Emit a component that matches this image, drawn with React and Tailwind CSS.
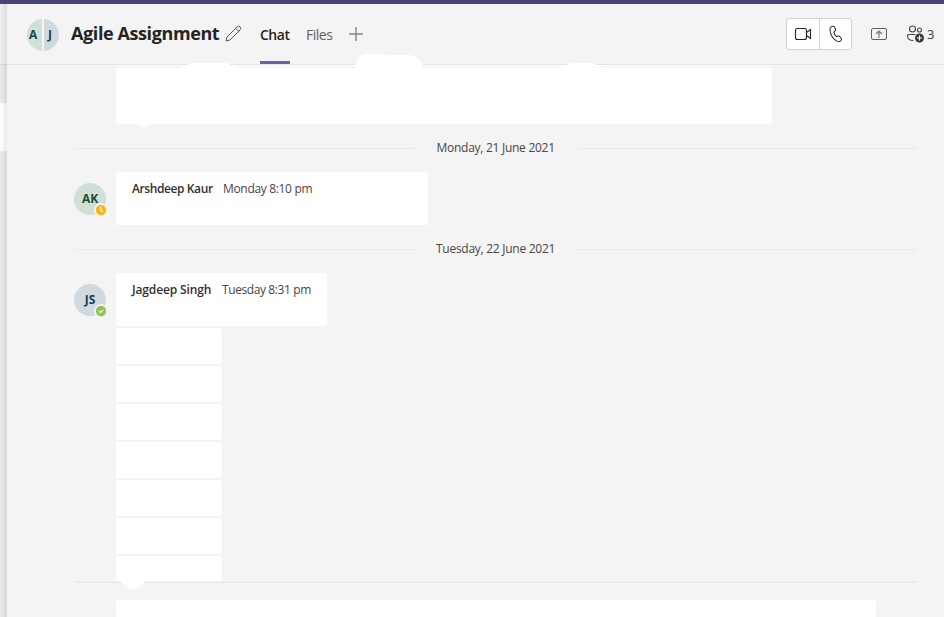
import React from "react";

const line = "h-px bg-[#e8e8e8]";

function DateDivider({ label, left, right }) {
  return (
    <div className="mt-4 flex h-4 w-[843px] items-center justify-between">
      <div className={`${line} ${left}`} />
      <span className="w-[120px] whitespace-nowrap text-[12px] leading-4 tracking-[-0.27px] text-[#484644]">{label}</span>
      <div className={`${line} ${right}`} />
    </div>
  );
}

function Avatar({ initials, colors, away }) {
  return (
    <div className={`relative mt-[11px] flex size-8 shrink-0 items-center justify-center rounded-full text-[12px] font-bold ${colors}`}>
      {initials}
      <svg className="absolute left-5 top-5" width="14" height="14" viewBox="0 0 14 14" fill="none">
        <circle cx="7" cy="7" r="7" fill="#f4f4f4" />
        <circle cx="7" cy="7" r="5.2" fill={away ? "#fbb615" : "#92c353"} />
        {away ? (
          <path d="M6.8 4v3.2l2 1.6" stroke="#fff" strokeWidth="1.2" />
        ) : (
          <path d="M4.9 7.1l1.5 1.4 2.7-2.7" stroke="#fff" strokeWidth="1.2" />
        )}
      </svg>
    </div>
  );
}

function Message({ name, time, width, gap, nameTracking, timeTracking, ...avatar }) {
  return (
    <div className="mt-4 flex h-[53px] gap-[10px]">
      <Avatar {...avatar} />
      <div className={`flex rounded-[3px] bg-white px-4 pt-[9px] text-[12px] leading-4 ${width}`}>
        <span className={`shrink-0 whitespace-nowrap font-semibold text-[#323130] ${gap} ${nameTracking}`}>{name}</span>
        <span className={`whitespace-nowrap text-[#484644] ${timeTracking}`}>{time}</span>
      </div>
    </div>
  );
}

function Header() {
  return (
    <header className="flex h-[61px] shrink-0 border-b border-[#e4e4e4] text-[#252423]">
      <div className="ml-5 mt-[15px] flex size-8 shrink-0 gap-[2px] overflow-hidden rounded-full text-[12px] font-bold leading-8">
        <span className="w-[15px] bg-[#cfe1d6] pl-[2px] text-[#1f4a38]">A</span>
        <span className="w-[15px] bg-[#cfdae0] pl-1 text-[#223d49]">J</span>
      </div>
      <h1 className="ml-3 mt-[17px] w-[149px] shrink-0 whitespace-nowrap text-[18px] font-bold leading-6 tracking-[-0.4px]">Agile Assignment</h1>
      <svg className="ml-[5px] mt-[21px] shrink-0" width="17" height="17" viewBox="0 0 17 17" fill="none" stroke="#555" strokeWidth="1">
        <path d="M1 16l1-4L12.2 1.8a2 2 0 012.8 0l.2.2a2 2 0 010 2.8L5 15l-4 1zM10.7 3.3l3 3" />
      </svg>
      <nav className="flex text-[14px]">
        <span className="ml-[18px] h-[60px] w-[30px] whitespace-nowrap border-b-[3px] border-[#6264a7] pt-[21px] font-semibold leading-5 tracking-[-0.5px]">Chat</span>
        <span className="ml-4 mt-[21px] w-[27px] whitespace-nowrap leading-5 tracking-[-0.5px] text-[#616161]">Files</span>
      </nav>
      <svg className="ml-4 mt-[23px] shrink-0" width="14" height="14" stroke="#858585" strokeWidth="1.4"><path d="M7 0v14M0 7h14" /></svg>
      <div className="ml-auto mt-[14px] flex h-8 w-[66px] shrink-0 rounded-[3px] border border-[#d1d1d1] bg-white">
        <div className="flex w-[33px] items-center justify-center border-r border-[#d1d1d1]">
          <svg width="18" height="14" viewBox="0 0 18 14" fill="none" stroke="#252423" strokeWidth="1.1">
            <rect x="1.5" y="1.5" width="11" height="11" rx="2" />
            <path d="M12.5 5.5l4-3v9l-4-3" />
          </svg>
        </div>
        <div className="flex flex-1 items-center justify-center">
          <svg width="14" height="18" viewBox="0 0 14 18" fill="none" stroke="#333" strokeWidth="1.05">
            <path d="M2.2 1.8l1.6-.5c.8-.2 1.5.1 1.9.9l.8 1.9c.3.7.1 1.4-.4 1.9L4.9 7.1c.1 1.5 1.3 3.7 2.7 4.5l1.6-.5c.7-.2 1.4 0 1.8.6l1.2 1.7c.4.6.4 1.4-.2 2l-.8.7c-.8.7-1.8.8-2.8.3C4 14.1 1.3 9.6 1 4.700c0-1.200.3-2.500 1.200-2.900z" />
          </svg>
        </div>
      </div>
      <svg className="ml-[19px] mt-[23px] shrink-0" width="16" height="14" viewBox="0 0 16 14" fill="none" stroke="#616161">
        <rect x=".5" y="1.5" width="15" height="11" rx="1.5" />
        <path d="M8 11V4M5 7l3-3 3 3" stroke="#777" strokeWidth="1.2" />
      </svg>
      <svg className="ml-5 mt-[21px] shrink-0" width="18" height="18" viewBox="0 0 18 18" fill="none" stroke="#484644" strokeWidth="1.1">
        <circle cx="5.5" cy="4" r="3" />
        <circle cx="12.5" cy="5" r="2" />
        <path d="M8.5 9.500H2A1.500 1.500 0 00.5 11c0 3 2 4.500 6 4.500" />
        <circle cx="12.5" cy="13" r="4.500" fill="#3b3a39" stroke="none" />
        <path d="M12.500 10.500v5M10 13h5" stroke="#fff" />
      </svg>
      <span className="ml-[2px] mr-[10px] mt-5 w-[7px] text-[13px] leading-5 text-[#3b3a39]">3</span>
    </header>
  );
}

export default function App() {
  return (
    <div className="flex h-[617px] w-[944px] flex-col overflow-hidden bg-[#f4f4f4] font-['Open_Sans','Noto_Sans',sans-serif]">
      <div className="h-1 shrink-0 bg-[#464775]" />
      <div className="flex min-h-0 flex-1">
        <aside className="relative flex w-[7px] shrink-0 flex-col">
          <div className="h-[60px] bg-[#f0f0f0]" />
          <div className="h-[39px] border-t border-[#dcdcdc] bg-[#ebebeb]" />
          <div className="h-12 bg-white" />
          <div className="flex-1 bg-[#ebebeb]" />
          <div className="absolute inset-0 bg-linear-to-r from-transparent to-black/8" />
        </aside>
        <div className="flex min-w-0 flex-1 flex-col">
          <Header />
          <main className="flex flex-col pl-[67px]">
            <div className="relative ml-[42px] h-[59px] w-[656px]">
              <div className="h-px w-[655px] bg-white" />
              <div className="mt-[2px] h-14 rounded-[3px] bg-white" />
              <svg className="absolute left-0 top-[-12px]" width="656" height="74" fill="#fff">
                <path d="M63 15Q72 12 76 10H111Q116 13 124 15zM239 16V12Q242 1 250 1H268L271 2H293Q304 3 306 13V16zM443 15Q451 12 455 10H476Q481 13 491 15zM19 71Q28 77 37 71z" />
              </svg>
            </div>
            <DateDivider label="Monday, 21 June 2021" left="w-[341px]" right="w-[339px]" />
            <Message initials="AK" colors="bg-[#cfe1d6] text-[#1f4a38]" away name="Arshdeep Kaur" time="Monday 8:10 pm" width="w-[312px]" gap="w-[91px]" nameTracking="tracking-[-0.4px]" timeTracking="tracking-[-0.33px]" />
            <DateDivider label="Tuesday, 22 June 2021" left="w-[341px]" right="w-[340px]" />
            <Message initials="JS" colors="bg-[#cfdae0] text-[#223d49]" name="Jagdeep Singh" time="Tuesday 8:31 pm" width="w-[211px]" gap="w-[90px]" nameTracking="tracking-[-0.13px]" timeTracking="tracking-[-0.4px]" />
            <div className="ml-[42px] mt-[2px] flex h-[253px] flex-col gap-[2px] overflow-hidden">
              {[0, 1, 2, 3, 4, 5, 6].map((i) => (
                <div key={i} className="h-9 w-[106px] shrink-0 rounded-r-[3px] bg-white" />
              ))}
            </div>
            <div className="relative h-[2px] w-[844px] border-b border-[#e9e9e9] bg-[#eeeeee]">
              <svg className="absolute left-[46px] top-[-4px]" width="26" height="12" fill="#fff"><path d="M1 0H25V4Q21 12 13 12Q5 12 1 4z" /></svg>
            </div>
            <div className="ml-[42px] mt-[17px] h-[17px] w-[760px] rounded-t-[3px] bg-white" />
          </main>
        </div>
      </div>
    </div>
  );
}
